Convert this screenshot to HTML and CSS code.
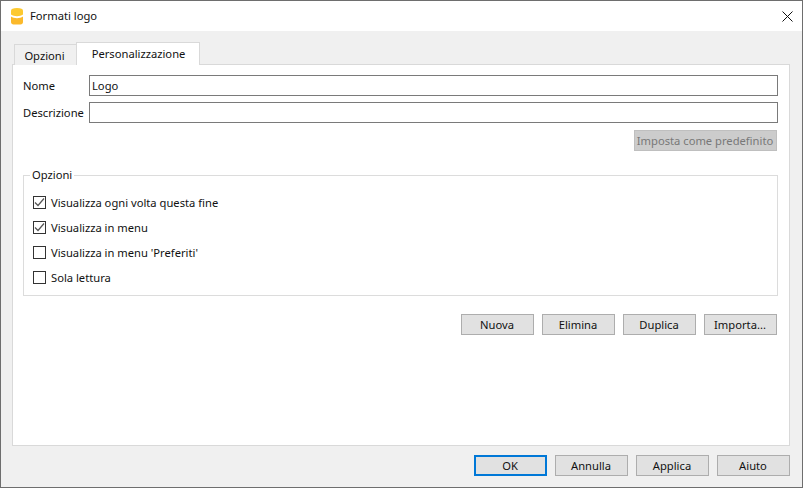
FILE: index.html
```html
<!DOCTYPE html>
<html lang="it">
<head>
<meta charset="utf-8">
<title>Formati logo</title>
<link rel="stylesheet" href="styles.css">
</head>
<body>
<div class="window">
  <header class="titlebar">
    <svg class="app-icon" width="14" height="17" viewBox="0 0 14 17"><path d="M1 2.500C1 1 3 0 7 0s6 1 6 2.500V6.500C10 8.800 4 8.800 1 6.500z" fill="#fdc92f"/><path d="M1 8.500C4 10.800 10 10.800 13 8.500V14c0 1.500-1 2.500-2.500 2.500h-7C2 16.500 1 15.500 1 14z" fill="#fbb92b"/></svg>
    <span class="title">Formati logo</span>
    <svg class="close" width="11" height="11" viewBox="0 0 11 11"><path d="M.5.500l10 10M10.500.500l-10 10" stroke="#111" stroke-width="1" fill="none"/></svg>
  </header>
  <main class="body">
    <div class="tabs">
      <div class="tab">Opzioni</div>
      <div class="tab active">Personalizzazione</div>
    </div>
    <section class="pane">
      <div class="field"><label class="flabel">Nome</label><div class="input">Logo</div></div>
      <div class="field"><label class="flabel">Descrizione</label><div class="input"></div></div>
      <div class="default-row"><button class="btn disabled">Imposta come predefinito</button></div>
      <fieldset class="group">
        <legend class="legend">Opzioni</legend>
        <div class="check"><span class="box"><svg width="11" height="11" viewBox="0 0 11 11"><path d="M1 5.500l3 3 6-7" stroke="#555" stroke-width="1.200" fill="none"/></svg></span><span class="check-text">Visualizza ogni volta questa fine</span></div>
        <div class="check"><span class="box"><svg width="11" height="11" viewBox="0 0 11 11"><path d="M1 5.500l3 3 6-7" stroke="#555" stroke-width="1.200" fill="none"/></svg></span><span class="check-text">Visualizza in menu</span></div>
        <div class="check"><span class="box"></span><span class="check-text">Visualizza in menu 'Preferiti'</span></div>
        <div class="check"><span class="box"></span><span class="check-text">Sola lettura</span></div>
      </fieldset>
      <div class="actions">
        <button class="btn">Nuova</button>
        <button class="btn">Elimina</button>
        <button class="btn">Duplica</button>
        <button class="btn">Importa...</button>
      </div>
    </section>
    <footer class="footer">
      <button class="btn primary">OK</button>
      <button class="btn">Annulla</button>
      <button class="btn">Applica</button>
      <button class="btn">Aiuto</button>
    </footer>
  </main>
</div>
</body>
</html>
```
FILE: styles.css
```css
* { box-sizing: border-box; }
html, body { margin: 0; height: 100%; }
body { font: 11.2px/16px "Noto Sans", Roboto, sans-serif; color: #111; }
.window {
  width: 803px; height: 488px;
  border: 1px solid #6e6e6e;
  display: flex; flex-direction: column;
  background: #f0f0f0;
}
.titlebar {
  height: 30px; background: #fff;
  display: flex; align-items: center;
  padding: 0 9px 0 9px;
  flex: none;
}
.app-icon { margin-right: 6px; }
.title { flex: 1; }
.body {
  flex: 1; display: flex; flex-direction: column;
  padding: 11px 12px 12px 11px;
  min-height: 0;
}
.tabs { display: flex; height: 23px; padding-left: 2px; flex: none; align-items: flex-end; position: relative; z-index: 1; margin-bottom: -1px; }
.tab {
  height: 21px; width: 63px;
  border: 1px solid #d9d9d9; border-bottom: none;
  background: #f0f0f0;
  text-align: center; line-height: 22px;
  padding-right: 2px;
}
.tab.active {
  height: 23px; width: 124px; margin-left: -1px;
  background: #fff; line-height: 21px;
  padding: 0 0 0 1px;
}
.pane {
  height: 382px; flex: none;
  background: #fff;
  border: 1px solid #d9d9d9;
  padding: 10px 11px 0 10px;
}
.field { display: flex; align-items: center; height: 21px; margin-bottom: 6px; }
.flabel { width: 66px; flex: none; }
.input {
  flex: 1; height: 21px;
  border: 1px solid #7a7a7a;
  padding: 0 2px; line-height: 19px;
}
.default-row { display: flex; justify-content: flex-end; margin-top: 7px; }
.btn {
  font: inherit; color: inherit;
  width: 73px; height: 21px; padding: 0 1px 0 0;
  background: #e1e1e1;
  border: 1px solid #adadad;
}
.btn.disabled {
  width: 143px; margin-right: 1px;
  background: #cccccc; border-color: #bfbfbf; color: #787878;
}
.btn.primary { border: 2px solid #0078d7; }
.group {
  margin: 16px 0 0; padding: 7px 0 0 9px;
  height: 129px;
  border: 1px solid #dcdcdc;
  min-width: 0;
}
.legend { padding: 0 2px; margin-left: -3px; line-height: 16px; }
.check { display: flex; align-items: center; height: 25px; }
.check-text { white-space: nowrap; }
.box {
  width: 13px; height: 13px; flex: none;
  border: 1px solid #333; background: #fff;
  margin-right: 5px;
  display: flex; align-items: center; justify-content: center;
}
.actions { display: flex; justify-content: flex-end; gap: 8px; margin-top: 18px; margin-right: 1px; }
.footer { display: flex; justify-content: flex-end; gap: 8px; margin-top: 9px; flex: none; }
```
